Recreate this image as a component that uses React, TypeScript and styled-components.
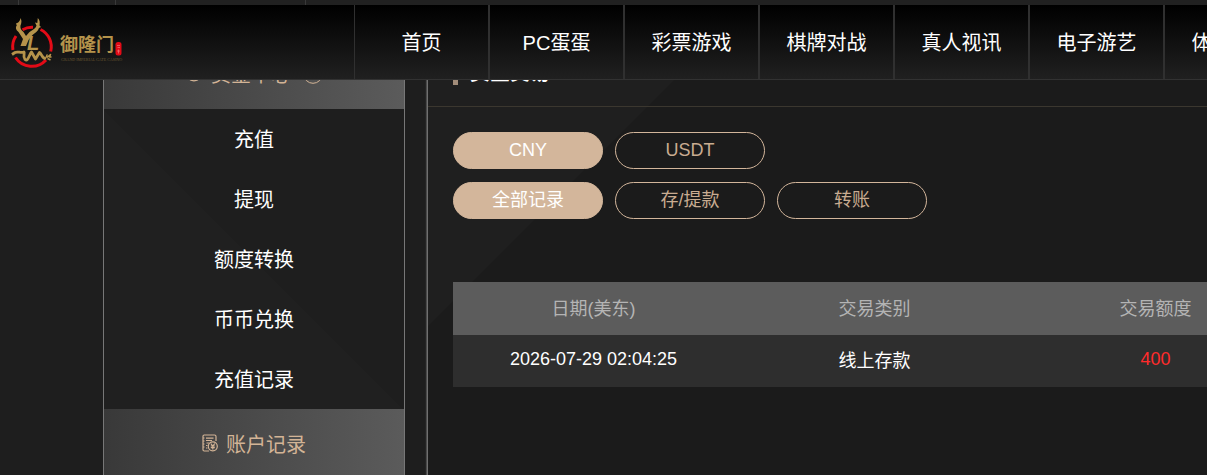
import React from 'react';
import styled, { createGlobalStyle } from 'styled-components';

const GlobalStyle = createGlobalStyle`
  *, *::before, *::after { box-sizing: border-box; }
  body {
    margin: 0;
    background: #1e1e1e;
    color: #fff;
    font-family: "Liberation Sans", "Noto Sans CJK SC", sans-serif;
  }
  a { color: inherit; text-decoration: none; }
  button { font: inherit; cursor: pointer; }
  h1 { margin: 0; }
`;

const Page = styled.div`
  height: 100vh;
  overflow: hidden;
`;

const Header = styled.header`
  position: fixed;
  top: 0;
  left: 0;
  right: 0;
  z-index: 10;
  overflow: hidden;
`;

const UtilityBar = styled.div`
  display: flex;
  height: 5px;
  background: #212121;
`;

const UtilityCell = styled.span<{ $width: number }>`
  width: ${(p) => p.$width}px;
  border-right: 1px solid #393939;
`;

const NavBar = styled.div`
  display: flex;
  height: 75px;
  border-bottom: 1px solid #323232;
  background: linear-gradient(#000, #202020);
`;

const LogoLink = styled.a`
  flex: 0 0 354px;
  padding: 10px 0 0 8px;
`;

const Nav = styled.nav`
  display: flex;
`;

const NavLink = styled.a`
  flex: 0 0 135px;
  display: flex;
  align-items: center;
  justify-content: center;
  padding-bottom: 2px;
  border: 1px solid #303030;
  border-width: 0 1px;
  font-size: 20px;
`;

const Layout = styled.div`
  display: flex;
  align-items: stretch;
  min-height: 100vh;
  padding-left: 103px;
`;

const Sidebar = styled.aside`
  flex: 0 0 302px;
  margin-right: 22px;
  padding-top: 39px;
  border: 1px solid #777;
  border-width: 0 1px;
  background: linear-gradient(45deg, #202020 260px, #1e1e1e 261px);
`;

const GroupButton = styled.button`
  display: flex;
  align-items: center;
  justify-content: center;
  gap: 8px;
  width: 100%;
  height: 70px;
  padding: 0 0 2px;
  border: 0;
  background: linear-gradient(90deg, #393939, #5b5b5b);
  color: #d3b496;
  font-size: 20px;
`;

const GroupArrow = styled.svg`
  margin: 2px 0 0 4px;
`;

const MenuLink = styled.a`
  display: flex;
  align-items: center;
  justify-content: center;
  height: 60px;
  padding-bottom: 2px;
  font-size: 20px;
`;

const Main = styled.main`
  flex: 1 0 0;
  padding: 39px 0 0 25px;
  border-left: 1px solid #707070;
  box-shadow: -1px 0 1px #4a4a4a;
  background: linear-gradient(135deg, #1f1f1f 230px, #1b1b1b 231px);
`;

const TitleBar = styled.div`
  display: flex;
  align-items: center;
  gap: 12px;
  height: 68px;
  margin-left: -25px;
  padding-left: 25px;
  border-bottom: 1px solid #3b372f;
  &::before {
    content: "";
    width: 5px;
    height: 24px;
    background: #a18c79;
  }
`;

const Title = styled.h1`
  padding-bottom: 2px;
  font-size: 20px;
  font-weight: 700;
`;

const Filters = styled.div`
  display: grid;
  gap: 13px;
  padding: 25px 0 63px;
`;

const FilterRow = styled.div`
  display: flex;
  gap: 12px;
`;

const Pill = styled.button<{ $active?: boolean }>`
  width: 150px;
  height: 37px;
  padding: 0 0 2px;
  border: 1px solid #d3b69b;
  border-radius: 19px;
  background: ${(p) => (p.$active ? '#d3b69b' : 'transparent')};
  color: ${(p) => (p.$active ? '#fff' : '#c9ac91')};
  font-size: 18px;
  line-height: 32px;
`;

const Records = styled.table`
  width: 100%;
  min-width: 843px;
  border-collapse: collapse;
  table-layout: fixed;
  font-size: 18px;
  text-align: center;
`;

const HeadCell = styled.th`
  height: 53px;
  padding: 0 0 4px;
  background: #5c5c5c;
  color: #b4b4b4;
  font-weight: 400;
`;

const Cell = styled.td<{ $negative?: boolean }>`
  height: 52px;
  padding: 0 0 4px;
  background: #2e2e2e;
  color: ${(p) => (p.$negative ? '#ff2b2b' : '#fff')};
`;

const BrandName = styled.text`
  fill: #b5934b;
  font-family: "Noto Sans CJK SC", sans-serif;
  font-size: 18px;
  font-weight: 700;
`;

const BrandTagline = styled.text`
  fill: #6d5a33;
  font-family: "Liberation Serif", serif;
  font-size: 4px;
`;

const BrandInitial = styled.text`
  fill: #b5934b;
  font-family: "Liberation Sans", sans-serif;
  font-size: 20px;
  font-style: italic;
  font-weight: 700;
`;

const Logo = () => (
  <svg width="120" height="56" viewBox="8 15 120 56" role="img" aria-label="御隆门">
    <g fill="none" stroke="#e30b17" strokeWidth="3">
      <path d="M12.900 50A19.300 19.300 0 0 1 16 36" />
      <path d="M22.500 29.700A19.300 19.300 0 0 1 33 27.300" />
      <path d="M40.500 29.500A19.300 19.300 0 0 1 50.700 51.500" />
      <path d="M15.500 57.500A19.300 19.300 0 0 0 46 60" />
    </g>
    <g fill="#b5934b">
      <path d="M20.500 18C22 20.500 21.500 23 20.500 25.500C20 28 21 30 23.500 32L26 36L29.500 32C33.500 29.500 36 28 36.500 25.500L35 22.500L37.300 23L37.800 18C40 20 40 23 39.500 25.500L41 27L39 28C38 31.500 35 33 32.500 35L28.500 40L26 46L20.500 46L23 39L18.500 32C15.500 29.500 15.500 27 16.800 25.500L16 23.500L18.200 22.500C19.500 21 20.300 20 20.500 18Z" />
    </g>
    <BrandInitial x="27" y="50">L</BrandInitial>
    <g fill="none" stroke="#b5934b" strokeLinejoin="round">
      <path strokeWidth="2.800" d="M12 54.500L15 52.500C18 51 20.500 53.500 24 52C25 53 22.500 56 25 59.500C28 62 29 55 31.500 52L35.500 59L39.500 52.500C42 54 42 58.500 45.500 58.500" />
      <path strokeWidth="1.500" d="M44 58.500C47 59 46 55.500 47.500 54.500M47 57.500L50.500 54.500L49.500 57L51.500 57M47.500 58.500L50.500 60" />
    </g>
    <BrandName x="60" y="51">御隆门</BrandName>
    <BrandTagline x="61" y="61">GRAND IMPERIAL GATE CASINO</BrandTagline>
    <rect x="115.500" y="42" width="6" height="13.500" rx="2.500" fill="#e30b17" />
    <path d="M117 45.500h3M117.500 47.500h2.500M117 51h3M118.500 49.500v4" stroke="#f08a86" strokeWidth=".6" />
  </svg>
);

const LedgerIcon = () => (
  <svg width="16" height="18" viewBox="0 0 16 18" fill="none" stroke="currentColor" strokeWidth="1.200" aria-hidden="true">
    <path d="M14 7V2.500Q14 1 12.500 1H2.200Q1 1 1 2.200V15.800Q1 17 2.200 17H7" />
    <path d="M4 4.200h7.500M4 6.500h6M4.500 9h2.500M4 11.500h1.500M4 14h1.500M1 4h1.500M1 7h1.500M1 10h1.500M1 13h1.500" />
    <circle cx="10.800" cy="12.300" r="4.500" />
    <path d="M8.800 9.500l2 2.500l2-2.500M8.800 12h4M8.800 13.700h4M10.800 12v3.500" />
  </svg>
);

const CoinIcon = () => (
  <svg width="18" height="18" viewBox="0 0 18 18" fill="none" stroke="currentColor" strokeWidth="1.300" aria-hidden="true">
    <circle cx="9" cy="9" r="7.800" />
    <path d="M6 5l3 4l3-4M6 9.500h6M9 9v5" />
  </svg>
);

const ArrowIcon = () => (
  <GroupArrow width="20" height="20" viewBox="0 0 20 20" fill="none" stroke="currentColor" aria-hidden="true">
    <circle cx="10" cy="10" r="9.300" />
    <path d="M6 8l4 4l4-4" />
  </GroupArrow>
);

const navItems = ['首页', 'PC蛋蛋', '彩票游戏', '棋牌对战', '真人视讯', '电子游艺', '体育赛事'];
const fundItems = ['充值', '提现', '额度转换', '币币兑换', '充值记录'];

export default function App() {
  return (
    <Page>
      <GlobalStyle />
      <Header>
        <UtilityBar>
          <UtilityCell $width={19} />
          <UtilityCell $width={97} />
          <UtilityCell $width={190} />
        </UtilityBar>
        <NavBar>
          <LogoLink href="#home"><Logo /></LogoLink>
          <Nav>
            {navItems.map((item) => <NavLink href="#nav" key={item}>{item}</NavLink>)}
          </Nav>
        </NavBar>
      </Header>
      <Layout>
        <Sidebar>
          <GroupButton type="button"><CoinIcon />资金中心<ArrowIcon /></GroupButton>
          {fundItems.map((item) => <MenuLink href="#funds" key={item}>{item}</MenuLink>)}
          <GroupButton type="button"><LedgerIcon />账户记录</GroupButton>
        </Sidebar>
        <Main>
          <TitleBar><Title>资金交易</Title></TitleBar>
          <Filters>
            <FilterRow>
              <Pill type="button" $active>CNY</Pill>
              <Pill type="button">USDT</Pill>
            </FilterRow>
            <FilterRow>
              <Pill type="button" $active>全部记录</Pill>
              <Pill type="button">存/提款</Pill>
              <Pill type="button">转账</Pill>
            </FilterRow>
          </Filters>
          <Records>
            <thead>
              <tr>
                <HeadCell scope="col">日期(美东)</HeadCell>
                <HeadCell scope="col">交易类别</HeadCell>
                <HeadCell scope="col">交易额度</HeadCell>
              </tr>
            </thead>
            <tbody>
              <tr>
                <Cell>2026-07-29 02:04:25</Cell>
                <Cell>线上存款</Cell>
                <Cell $negative>400</Cell>
              </tr>
            </tbody>
          </Records>
        </Main>
      </Layout>
    </Page>
  );
}
